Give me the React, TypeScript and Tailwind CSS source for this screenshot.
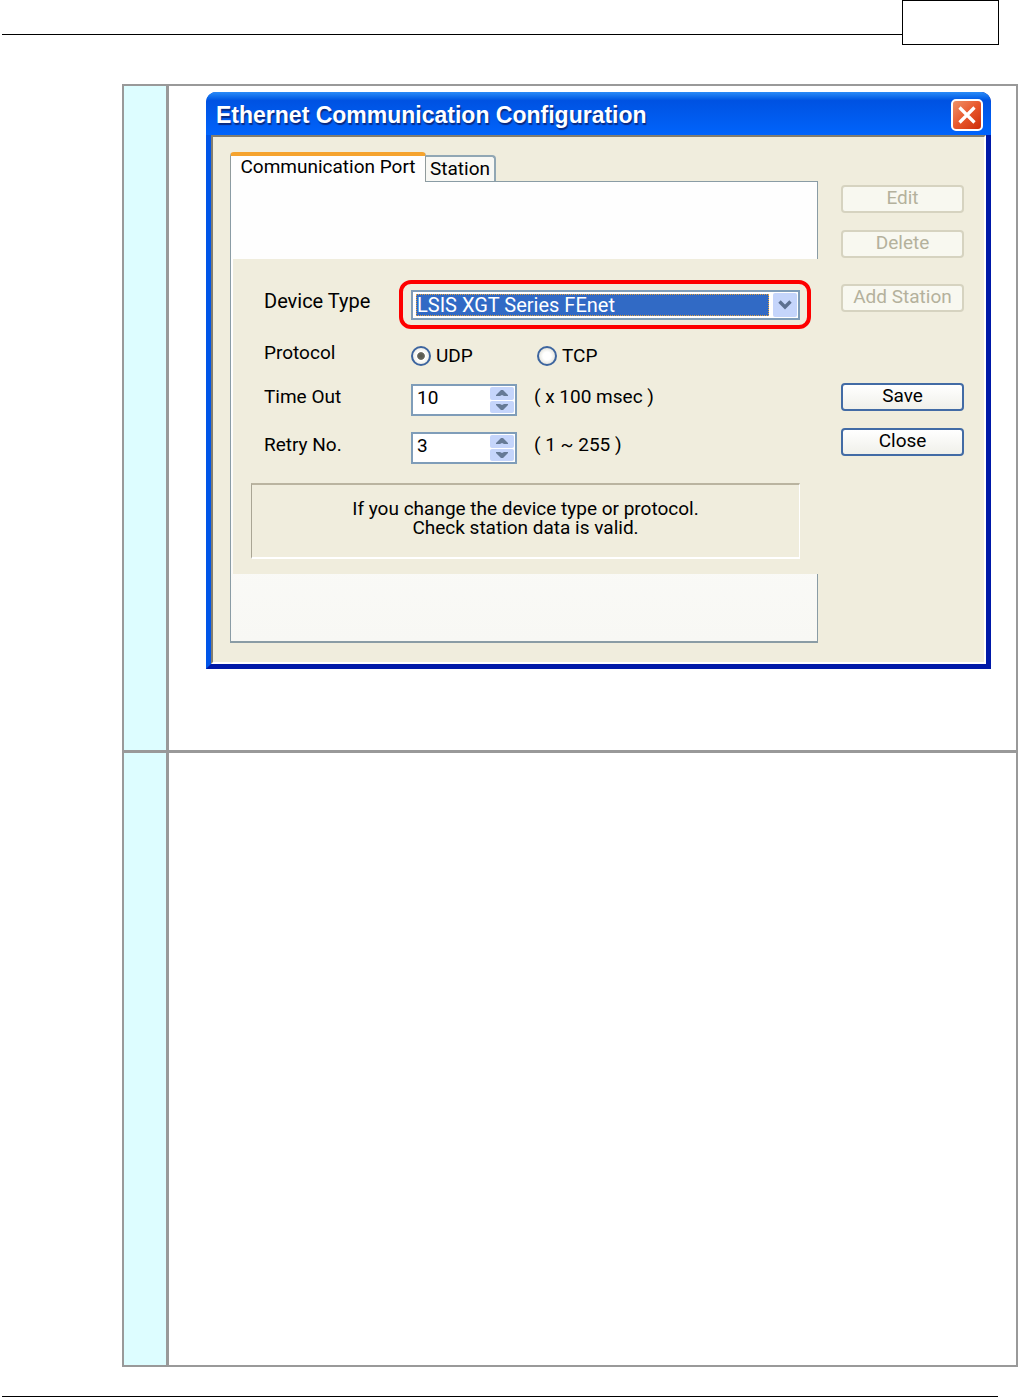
import { useId, useState, type ReactNode } from "react";

function ChevronDown() {
  return (
    <svg viewBox="0 0 14 10" className="h-[10px] w-[14px]" aria-hidden="true">
      <path d="M1.5 1.5 7 7 12.5 1.5" fill="none" stroke="#5d7090" strokeWidth="3.4" />
    </svg>
  );
}

function SpinArrow({ down = false }: { down?: boolean }) {
  return (
    <svg viewBox="0 0 12 6" className="h-[6px] w-[12px]" aria-hidden="true">
      <path
        d={down ? "M0 0H4L6 1 8 0H12V1L7 6H5L0 1Z" : "M0 6H4L6 5 8 6H12V5L7 0H5L0 5Z"}
        fill="#667a96"
      />
    </svg>
  );
}

function CloseButton() {
  return (
    <button
      type="button"
      aria-label="Close window"
      className="flex size-8 items-center justify-center rounded-[5px] border-2 border-white bg-linear-to-br from-[#ee9168] via-[#e8572b] to-[#cc2a06]"
    >
      <svg viewBox="0 0 18 18" className="size-[18px]" aria-hidden="true">
        <path d="M1.5 1.5 16.5 16.5M16.5 1.5 1.5 16.5" stroke="#fff" strokeWidth="3.2" />
      </svg>
    </button>
  );
}

function PushButton({ children, disabled = false }: { children: ReactNode; disabled?: boolean }) {
  return (
    <button
      type="button"
      disabled={disabled}
      className="flex h-7 w-full items-start justify-center rounded border-2 border-[#426ba5] bg-linear-to-b from-white to-[#f0f0ea] leading-[22px] disabled:border-[#d6d3c0] disabled:bg-none disabled:bg-[#f8f8f0] disabled:text-[#b4b19c]"
    >
      {children}
    </button>
  );
}

function SpinRow({ label, initial, unit }: { label: string; initial: string; unit: string }) {
  const id = useId();
  const [value, setValue] = useState(initial);
  const step = (amount: number) => setValue(String(Math.max(1, Number(value) + amount)));
  return (
    <div className="flex items-start">
      <label htmlFor={id} className="w-[147px] leading-[26px]">
        {label}
      </label>
      <div className="flex h-8 w-[106px] border-2 border-[#7f9db9] bg-white p-px">
        <input
          id={id}
          value={value}
          onChange={(event) => setValue(event.target.value)}
          className="h-[22px] min-w-0 flex-1 pl-[3px] leading-[22px] outline-none"
        />
        <div className="flex w-6 flex-col gap-px">
          <button
            type="button"
            aria-label={`Increase ${label}`}
            onClick={() => step(1)}
            className="flex flex-1 items-center justify-center rounded-xs bg-[#c5d5fb]"
          >
            <SpinArrow />
          </button>
          <button
            type="button"
            aria-label={`Decrease ${label}`}
            onClick={() => step(-1)}
            className="flex flex-1 items-center justify-center rounded-xs bg-[#c5d5fb]"
          >
            <SpinArrow down />
          </button>
        </div>
      </div>
      <span className="ml-[17px] leading-[26px]">{unit}</span>
    </div>
  );
}

function ProtocolOption({ name, defaultChecked = false }: { name: string; defaultChecked?: boolean }) {
  return (
    <label className="flex w-[126px] items-center gap-[5px]">
      <input
        type="radio"
        name="protocol"
        defaultChecked={defaultChecked}
        className="size-5 appearance-none rounded-full border-2 border-[#3d659f] bg-[radial-gradient(circle,#ffffff_35%,#e3e3dc_75%)] checked:bg-[radial-gradient(circle,#55554c_0,#66665c_30%,#ffffff_38%,#edede6_75%)]"
      />
      <span>{name}</span>
    </label>
  );
}

function PortForm() {
  return (
    <form className="-mr-0.5 ml-0.5 bg-[#f0eddd] pt-[21px] pr-[9px] pb-[15px] pl-[18px]">
      <div className="flex items-start pl-[13px] text-xl">
        <label htmlFor="device-type" className="w-[135px] pt-2 leading-[26px]">
          Device Type
        </label>
        <div className="-mr-px min-w-0 flex-1 rounded-xl border-4 border-[#fe0000] pt-[6px] pr-[7px] pb-[5px] pl-2">
          <div className="relative flex h-[30px] border-2 border-[#7f9db9] bg-white py-0.5 pr-[29px] pl-[3px]">
            <select
              id="device-type"
              className="h-[22px] w-full appearance-none bg-[#316ac5] pl-px leading-[20px] text-white outline-1 -outline-offset-1 outline-dotted outline-[#e0a040]"
            >
              <option>LSIS XGT Series FEnet</option>
            </select>
            <span className="pointer-events-none absolute inset-y-px right-px flex w-6 items-center justify-center rounded-xs bg-[#c5d5fb]">
              <ChevronDown />
            </span>
          </div>
        </div>
      </div>
      <div className="flex flex-col gap-4 pt-[11px] pl-[13px]">
        <fieldset className="flex h-7 items-start">
          <legend className="float-left w-[147px] leading-[26px]">Protocol</legend>
          <div className="flex h-8 items-center">
            <ProtocolOption name="UDP" defaultChecked />
            <ProtocolOption name="TCP" />
          </div>
        </fieldset>
        <SpinRow label="Time Out" initial="10" unit="( x 100 msec )" />
        <SpinRow label="Retry No." initial="3" unit="( 1 ~ 255 )" />
      </div>
      <div className="mt-[19px] mr-[10px] h-[76px] border border-t-2 border-t-[#bab4a0] border-r-white border-b-2 border-b-white border-l-[#a9a594] pt-[14px] text-center leading-[19px]">
        <p>If you change the device type or protocol.</p>
        <p>Check station data is valid.</p>
      </div>
    </form>
  );
}

function ConfigDialog() {
  return (
    <section
      role="dialog"
      aria-label="Ethernet Communication Configuration"
      className="rounded-t-[10px] border-x-[5px] border-b-[5px] border-l-[#0055e8] border-r-[#0019a8] border-b-[#0019a8] bg-[#0055e8] text-[19px] text-black"
    >
      <header className="-mx-[5px] flex h-[43px] items-center justify-between rounded-t-[10px] bg-linear-to-b from-[#2a8cf8] via-[#0052e2] via-20% to-[#0064fc] pt-0.5 pr-2 pl-[10px]">
        <h1 className="font-['Liberation_Sans',sans-serif] text-[23px] leading-7 font-bold text-white [text-shadow:1px_2px_1px_#0a2a80]">
          Ethernet Communication Configuration
        </h1>
        <CloseButton />
      </header>
      <div className="flex border-2 border-t-[#817d70] border-r-white border-b-white border-l-[#817d70] bg-[#f0eddd] pr-[20px] pb-[19px] pl-[17px]">
        <div className="min-w-0 flex-1 pt-[15px]">
          <div role="tablist" className="flex items-end">
            <button
              type="button"
              role="tab"
              aria-selected="true"
              className="relative z-10 -mb-px h-[30px] w-[196px] rounded-t border-x border-t-4 border-x-[#919b9c] border-t-[#f5a32e] bg-[#fefefe] leading-[22px] whitespace-nowrap"
            >
              <span className="flex h-full justify-center">Communication Port</span>
            </button>
            <button
              type="button"
              role="tab"
              aria-selected="false"
              className="h-[26px] w-[70px] rounded-tr border-t-2 border-r-2 border-[#91a7b4] bg-[#f8f8f4] leading-6"
            >
              Station
            </button>
          </div>
          <div
            role="tabpanel"
            className="border border-b-2 border-[#8a9ca5] bg-linear-to-b from-[#fefefe] from-40% to-[#f8f8f4] pt-[77px] pb-[67px]"
          >
            <PortForm />
          </div>
        </div>
        <div className="ml-[23px] flex w-[123px] flex-col pt-[48px]">
          <div className="flex flex-col gap-[17px]">
            <PushButton disabled>Edit</PushButton>
            <PushButton disabled>Delete</PushButton>
          </div>
          <div className="pt-[26px]">
            <PushButton disabled>Add Station</PushButton>
          </div>
          <div className="flex flex-col gap-[17px] pt-[71px]">
            <PushButton>Save</PushButton>
            <PushButton>Close</PushButton>
          </div>
        </div>
      </div>
    </section>
  );
}

export default function App() {
  return (
    <div className="flex min-h-screen flex-col bg-white font-[Roboto,sans-serif]">
      <header className="mr-[19px] ml-0.5 flex h-[45px]">
        <div className="h-[35px] flex-1 border-b border-black" />
        <div className="w-[97px] border border-black" />
      </header>
      <main className="mt-[39px] ml-[122px] flex flex-1 flex-col border-2 border-[#999]">
        <div className="flex border-b-[3px] border-[#999]">
          <div className="w-[45px] border-r-[3px] border-[#999] bg-[#ddfdff]" />
          <div className="min-w-0 flex-1 pt-[6px] pr-[25px] pb-[81px] pl-[37px]">
            <ConfigDialog />
          </div>
        </div>
        <div className="flex flex-1">
          <div className="w-[45px] border-r-[3px] border-[#999] bg-[#ddfdff]" />
          <div className="flex-1" />
        </div>
      </main>
      <footer className="mt-[29px] mr-5 ml-0.5 border-t border-black" />
    </div>
  );
}
